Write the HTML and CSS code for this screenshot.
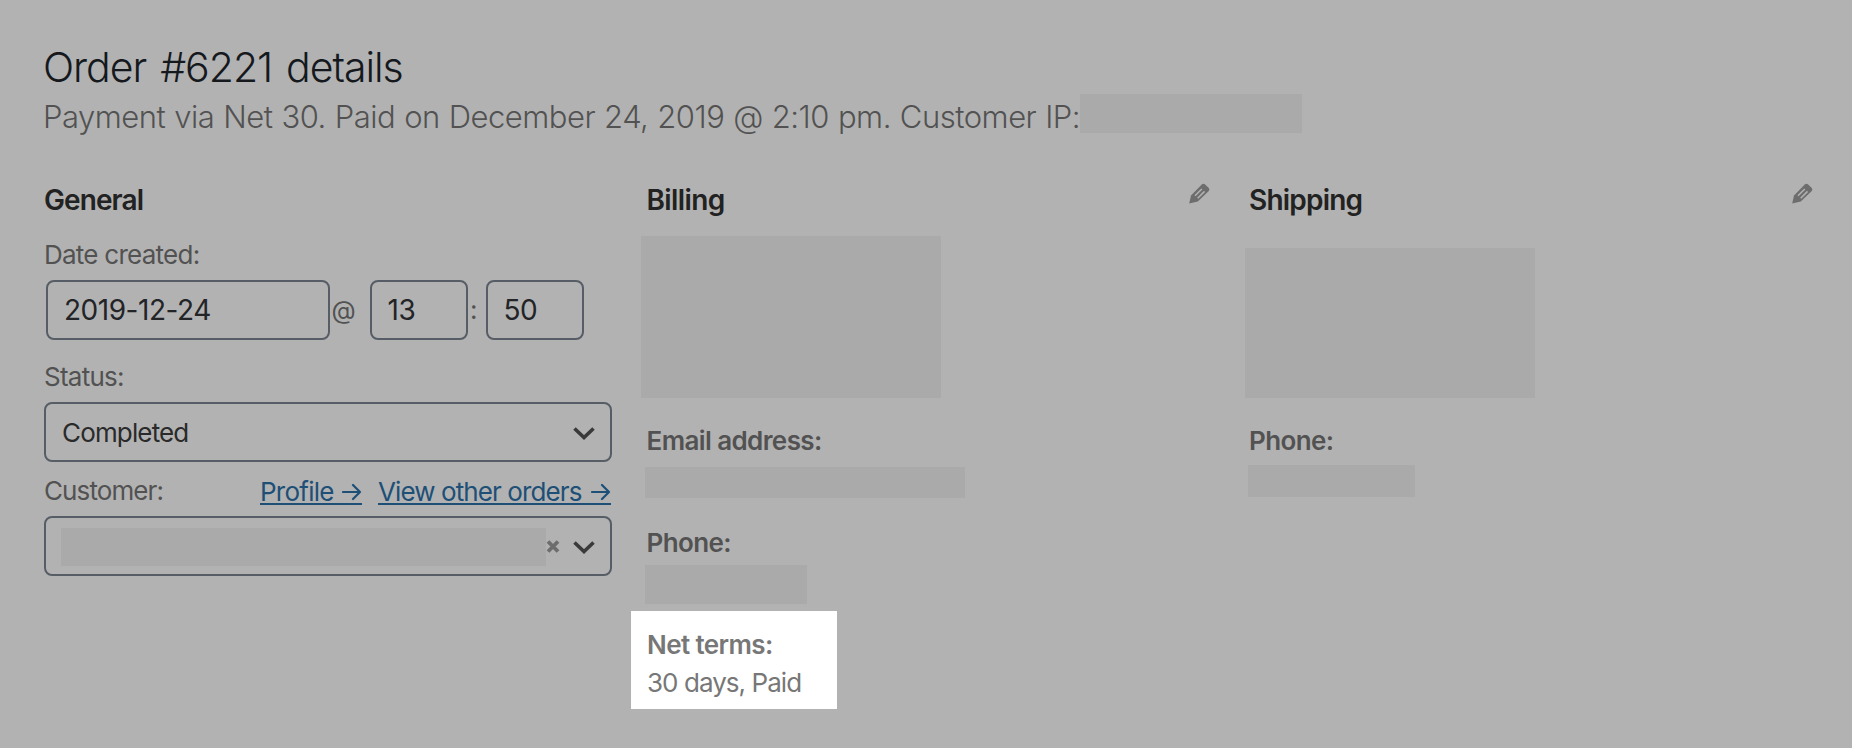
FILE: index.html
```html
<!DOCTYPE html>
<html lang="en">
<head>
<meta charset="utf-8">
<title>Order #6221 details</title>
<link rel="stylesheet" href="styles.css">
</head>
<body>
<svg class="defs" width="0" height="0" aria-hidden="true">
  <symbol id="pencil" viewBox="0 0 21 21"><path d="M2 12.500 12.800 1.400Q14.300 0 15.900 1.200L19.800 5Q21 6.500 19.800 8L8.800 18.600.2 20.600z"/><path class="slot" d="M6 12.800 12.800 6M8.700 15.200 15.500 8.400"/></symbol>
  <symbol id="chevron" viewBox="0 0 22 13"><path d="M1.500 1.500 11 10.500 20.500 1.500" fill="none" stroke="currentColor" stroke-width="3.600"/></symbol>
  <symbol id="arrow" viewBox="0 0 20 18"><path d="M1 9H18M11 2 18 9 11 16" fill="none" stroke="currentColor" stroke-width="2.200" stroke-linecap="round" stroke-linejoin="round"/></symbol>
  <symbol id="cross" viewBox="0 0 14 13"><path d="M2 1.500 12 11.500M12 1.500 2 11.500" fill="none" stroke="currentColor" stroke-width="3.800"/></symbol>
</svg>
<main class="order">
  <h1 class="title">Order #6221 details</h1>
  <p class="meta"><span class="meta-text">Payment via Net 30. Paid on December 24, 2019 @ 2:10 pm. Customer IP:</span><i class="redacted ip"></i></p>
  <div class="columns">
    <section class="column general">
      <h2 class="heading general-heading">General</h2>
      <label class="label date-label">Date created:</label>
      <div class="date-row">
        <div class="field date">2019-12-24</div>
        <span class="at">@</span>
        <div class="field time">13</div>
        <span class="colon">:</span>
        <div class="field time">50</div>
      </div>
      <label class="label status-label">Status:</label>
      <div class="field select"><span class="value">Completed</span><svg class="chevron"><use href="#chevron"/></svg></div>
      <div class="customer-row">
        <span class="customer">Customer:</span>
        <a class="link profile"><span>Profile</span><svg class="arrow"><use href="#arrow"/></svg></a>
        <a class="link others"><span>View other orders</span><svg class="arrow"><use href="#arrow"/></svg></a>
      </div>
      <div class="field select user"><i class="redacted name"></i><svg class="cross"><use href="#cross"/></svg><svg class="chevron"><use href="#chevron"/></svg></div>
    </section>
    <section class="column">
      <h2 class="heading billing-heading"><span>Billing</span><svg class="pencil"><use href="#pencil"/></svg></h2>
      <i class="redacted billing-address"></i>
      <strong class="strong">Email address:</strong>
      <i class="redacted email"></i>
      <strong class="strong">Phone:</strong>
      <i class="redacted billing-phone"></i>
      <div class="terms"><strong class="strong">Net terms:</strong><p class="terms-value">30 days, Paid</p></div>
    </section>
    <section class="column">
      <h2 class="heading shipping-heading"><span>Shipping</span><svg class="pencil"><use href="#pencil"/></svg></h2>
      <i class="redacted shipping-address"></i>
      <strong class="strong">Phone:</strong>
      <i class="redacted shipping-phone"></i>
    </section>
  </div>
</main>
</body>
</html>
```
FILE: styles.css
```css
* { box-sizing: border-box; }
body { margin: 0; background: #b2b2b2; color: #525252; font: 26px/38px Inter, "Liberation Sans", sans-serif; }
.defs { position: absolute; }
.order { height: 748px; padding: 42px 0 0 44px; overflow: hidden; white-space: nowrap; }
h1, h2, p { margin: 0; }
svg { display: block; flex: none; fill: currentColor; }
.title { height: 50px; margin-left: -1px; color: #15191d; font: 350 41px/50px Inter, sans-serif; letter-spacing: -1.020px; word-spacing: 3.400px; }
.meta { display: flex; height: 42px; font: 330 31px/50px Inter, sans-serif; letter-spacing: -0.490px; word-spacing: 0.700px; }
.meta-text { width: 1037px; margin-left: -1px; }
.redacted { display: block; background: #aaa; }
.ip { width: 222px; height: 39px; margin-top: 2px; }
.columns { display: grid; grid-template-columns: 568px 568px 568px; column-gap: 34.500px; margin-top: 46px; }
.column { display: flex; flex-direction: column; align-items: flex-start; }
.heading { display: flex; justify-content: space-between; width: 100%; height: 40px; color: #222; font-size: 28px; line-height: 40px; font-weight: 600; }
.general-heading { letter-spacing: -0.900px; }
.billing-heading { letter-spacing: -0.600px; }
.shipping-heading { letter-spacing: -0.800px; }
.pencil { width: 21px; height: 21px; margin: 3px 4.500px 0 0; color: #6d6d6d; }
.slot { fill: none; stroke: #b2b2b2; stroke-width: 1.500; }
.label { height: 38px; letter-spacing: -0.750px; }
.date-label { margin-top: 16px; }
.date-row { display: flex; align-items: center; height: 60px; margin: 6px 0 0 2px; }
.field { display: flex; align-items: center; height: 60px; border: 2px solid #575d66; border-radius: 8px; color: #222427; }
.date { width: 284px; padding-left: 16px; font-size: 28px; letter-spacing: -0.470px; }
.time { width: 98px; padding-left: 15.500px; font-size: 28px; letter-spacing: -0.500px; }
.at { width: 40px; padding-left: 1.500px; font-size: 25px; }
.colon { width: 18px; padding-left: 2px; }
.status-label { margin-top: 18px; }
.select { width: 568px; margin-top: 6px; padding: 0 15px 0 16px; justify-content: space-between; color: #2a2a2a; letter-spacing: -0.850px; }
.value { padding-top: 2px; }
.chevron { width: 22px; height: 13px; margin-top: 2px; color: #3a3a3a; }
.customer-row { display: flex; align-items: center; width: 568px; height: 38px; margin-top: 10px; letter-spacing: -0.900px; }
.link { display: flex; align-items: center; justify-content: space-between; height: 25px; margin-top: 3px; border-bottom: 2px solid #1d4f77; color: #1d4f77; }
.profile { width: 102px; margin-left: auto; letter-spacing: -0.750px; }
.others { width: 233px; margin-left: 16px; margin-right: 1px; }
.arrow { width: 20px; height: 18px; }
.user { justify-content: flex-start; padding-left: 15px; }
.name { width: 485px; height: 38px; margin-top: 2px; }
.cross { width: 14px; height: 13px; margin-top: 1px; color: #6d6d6d; }
.user .chevron { margin-left: 13px; margin-top: 2px; }
.strong { font-weight: 600; letter-spacing: -0.600px; }
.billing-address { width: 300px; height: 162px; margin: 16px 0 24px -6px; }
.email { width: 320px; height: 31px; margin: 7px 0 26px -2px; }
.billing-phone { width: 162px; height: 39px; margin: 3px 0 7px -2px; }
.terms { display: flex; flex-direction: column; width: 206px; height: 98px; margin-left: -15.500px; padding: 15px 0 0 16px; background: #fff; color: #777; }
.terms-value { letter-spacing: -0.950px; }
.shipping-address { width: 290px; height: 150px; margin: 28px 0 24px -4px; }
.shipping-phone { width: 167px; height: 32px; margin: 5px 0 0 -1px; }
```
